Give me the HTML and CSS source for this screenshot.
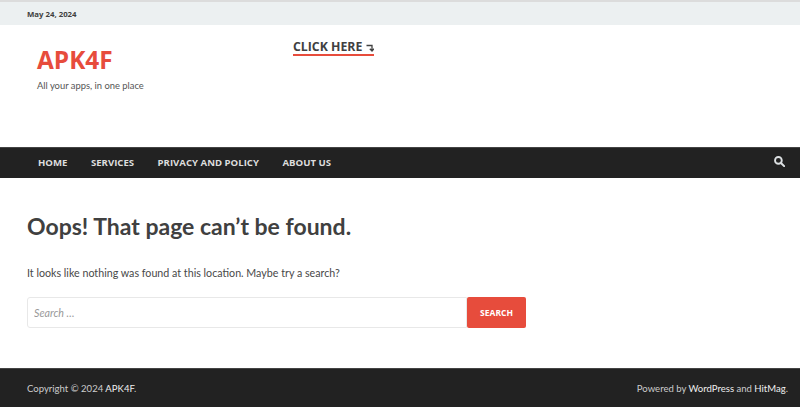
FILE: index.html
```html
<!DOCTYPE html>
<html lang="en">

<head>
   <meta charset="UTF-8">
   <meta name="viewport" content="width=device-width, initial-scale=1.0">
   <title>Page not found - APK4F</title>
   <link rel="stylesheet" href="styles.css">
</head>

<body>
   <div class="top-bar">
      <div class="date">May 24, 2024</div>
   </div>
   <header class="site-header">
      <div class="branding">
         <a class="site-title" href="#">APK4F</a>
         <p class="tagline">All your apps, in one place</p>
      </div>
      <a class="click-here" href="#">CLICK HERE
         <svg class="turn-arrow" width="8" height="8" viewBox="0 0 8 8" aria-hidden="true">
            <path d="M0.5 1.5H6V6.5M3.8 4.8L6 7L8 4.8" fill="none" stroke="#404040" stroke-width="1.3" />
         </svg>
      </a>
   </header>
   <nav class="main-nav">
      <ul class="menu">
         <li><a href="#">HOME</a></li>
         <li><a href="#">SERVICES</a></li>
         <li><a href="#">PRIVACY AND POLICY</a></li>
         <li><a href="#">ABOUT US</a></li>
      </ul>
      <svg class="search-icon" width="11" height="11" viewBox="0 0 13 13" aria-hidden="true">
         <circle cx="5.2" cy="5.2" r="4" fill="none" stroke="#dde1e3" stroke-width="2.2" />
         <path d="M8.2 8.2L12 12" stroke="#dde1e3" stroke-width="2.4" stroke-linecap="round" />
      </svg>
   </nav>
   <main class="content">
      <h1>Oops! That page can’t be found.</h1>
      <p class="message">It looks like nothing was found at this location. Maybe try a search?</p>
      <form class="search-form">
         <input type="text" class="search-field" placeholder="Search …">
         <button type="button" class="search-submit">SEARCH</button>
      </form>
   </main>
   <footer class="site-footer">
      <div>Copyright © 2024 <a href="#">APK4F</a>.</div>
      <div>Powered by <a href="#">WordPress</a> and <a href="#">HitMag</a>.</div>
   </footer>
</body>

</html>
```

FILE: styles.css
```css
* {
   margin: 0;
   padding: 0;
   box-sizing: border-box;
}

body {
   font-family: 'Lato', sans-serif;
   color: #404040;
   background: #fff;
   overflow: hidden;
}

a {
   text-decoration: none;
}

.top-bar {
   height: 25px;
   padding: 0 27px;
   display: flex;
   align-items: center;
   background: #ecf0f1;
   border-top: 2px solid #dcdcdc;
}

.date {
   font-family: 'Open Sans', sans-serif;
   font-size: 7.8px;
   font-weight: 700;
   color: #404040;
}

.site-header {
   height: 122px;
   padding: 0 37px;
   display: flex;
   align-items: flex-start;
}

.branding {
   width: 256px;
   padding-top: 17px;
}

.site-title {
   display: block;
   font-family: 'Open Sans', sans-serif;
   font-size: 24.4px;
   line-height: 36px;
   font-weight: 700;
   color: #e74c3c;
}

.tagline {
   font-size: 9.4px;
   line-height: 16px;
   color: #555;
}

.click-here {
   margin-top: 14px;
   height: 17px;
   font-family: 'Open Sans', sans-serif;
   font-size: 12.3px;
   line-height: 15px;
   font-weight: 700;
   color: #404040;
   border-bottom: 2px solid #e74c3c;
   white-space: nowrap;
}

.turn-arrow {
   vertical-align: -1px;
}

.main-nav {
   height: 31px;
   padding: 0 15px 4px 27px;
   display: flex;
   align-items: center;
   justify-content: space-between;
   background: #222;
   border-top: 1px solid #444;
}

.menu {
   display: flex;
   list-style: none;
   gap: 23.5px;
   padding-left: 11px;
   margin-bottom: 3px;
}

.menu a {
   font-family: 'Open Sans', sans-serif;
   font-size: 9.6px;
   font-weight: 700;
   color: #ddd;
}

.content {
   height: 190px;
   padding: 33px 27px 0;
}

h1 {
   font-size: 23px;
   line-height: 30px;
   font-weight: 700;
   color: #404040;
}

.message {
   margin-top: 23px;
   font-size: 10.7px;
   line-height: 18px;
   color: #484848;
}

.search-form {
   margin-top: 15px;
   width: 499px;
   height: 31px;
   display: flex;
}

.search-field {
   flex: 1;
   padding: 0 6px;
   font-family: 'Lato', sans-serif;
   font-size: 10.7px;
   font-style: italic;
   color: #404040;
   border: 1px solid #e8e8e8;
   border-radius: 3px 0 0 3px;
   outline: none;
}

.search-field::placeholder {
   color: #999;
}

.search-submit {
   width: 59px;
   font-family: 'Open Sans', sans-serif;
   font-size: 8.5px;
   font-weight: 700;
   color: #fff;
   background: #e74c3c;
   border: none;
   border-radius: 2px;
}

.site-footer {
   height: 39px;
   padding: 0 12px 0 27px;
   display: flex;
   align-items: center;
   justify-content: space-between;
   font-size: 9.55px;
   color: #ccc;
   background: #222;
   border-top: 1px solid #444;
}

.site-footer a {
   color: #eee;
}
```
